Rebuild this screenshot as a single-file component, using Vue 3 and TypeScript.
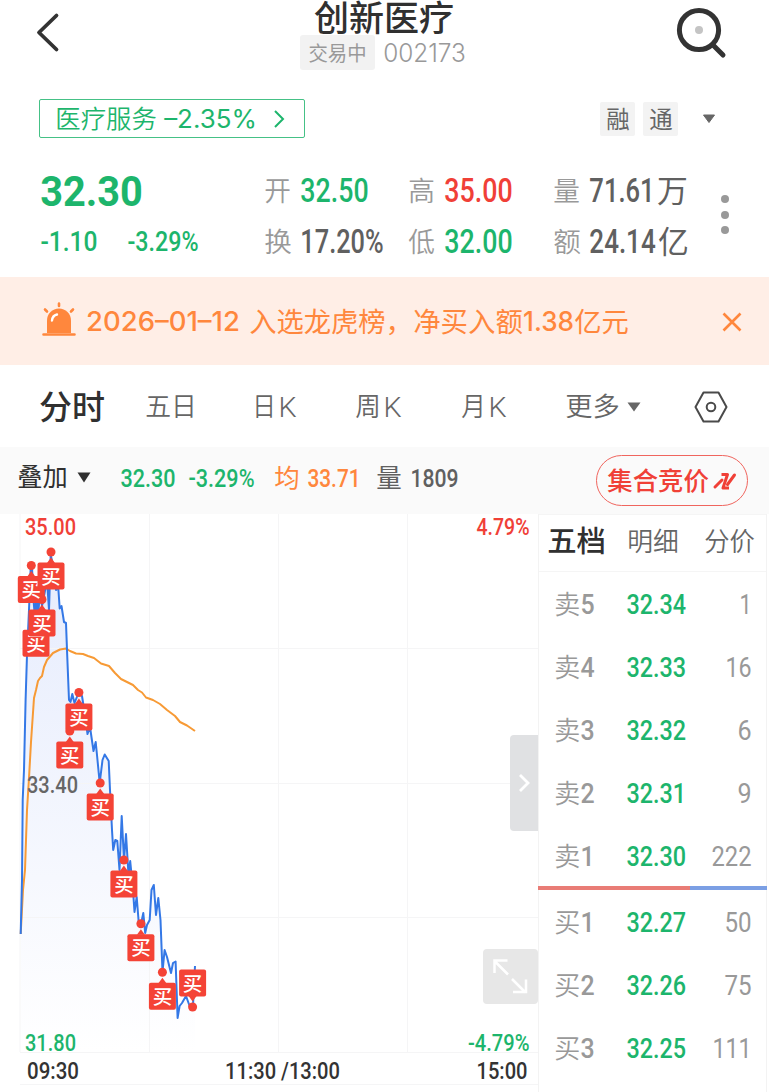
<script setup lang="ts">
import { h, type FunctionalComponent } from 'vue'

interface LabelProps {
  t: string
  w: number
  s: number
  k?: 'num' | 'cjk' | 'lat'
  b?: number
}

const faces = {
  num: { family: 'Roboto, "Liberation Sans", sans-serif', base: 0.85, side: 0.02 },
  cjk: { family: '"Noto Sans CJK SC", sans-serif', base: 0.88, side: 0.03 },
  lat: { family: 'Inter, "Liberation Sans", sans-serif', base: 0.864, side: 0.035 },
}

// A label fitted to a given width, so that digits take a condensed shape.
const Label: FunctionalComponent<LabelProps> = (p) => {
  const face = faces[p.k ?? 'num']
  const side = face.side * p.s
  return h('svg', { class: 'label', width: p.w, height: p.s }, [
    h(
      'text',
      {
        x: -side,
        y: face.base * p.s,
        textLength: p.w + side * 2,
        lengthAdjust: 'spacingAndGlyphs',
        'font-family': face.family,
        'font-size': p.s,
        'font-weight': p.b ?? (p.k === 'cjk' || p.k === 'lat' ? 400 : 500),
        fill: 'currentColor',
      },
      p.t,
    ),
  ])
}
Label.props = ['t', 'w', 's', 'k', 'b']

const tabs = [
  { t: '五日', k: '', w: 50 },
  { t: '日', k: 'K', w: 22 },
  { t: '周', k: 'K', w: 24 },
  { t: '月', k: 'K', w: 23 },
]

interface Level { side: string; n: string; price: string; qty: string; w: number }
const asks: Level[] = [
  { side: '卖', n: '5', price: '32.34', qty: '1', w: 11 },
  { side: '卖', n: '4', price: '32.33', qty: '16', w: 25 },
  { side: '卖', n: '3', price: '32.32', qty: '6', w: 13 },
  { side: '卖', n: '2', price: '32.31', qty: '9', w: 13 },
  { side: '卖', n: '1', price: '32.30', qty: '222', w: 39 },
]
const bids: Level[] = [
  { side: '买', n: '1', price: '32.27', qty: '50', w: 26 },
  { side: '买', n: '2', price: '32.26', qty: '75', w: 26 },
  { side: '买', n: '3', price: '32.25', qty: '111', w: 38 },
]

const price =
  '20.7,934 22,880 22.7,800 24,770 25.6,700 27,655 29,610 30.7,567 32,567 33.5,600 35,618 36.5,592 38,618 40,590 42,606 44,596 47,580 49,610 50.7,555 53,565 56,590 58.3,588 59.7,608.5 61.5,606 64,622 66,623 67.2,655 69,700 70.5,702 72.3,694 74.5,703 78.5,693 82,696 85,715 87.5,734 90,727 93.5,751 95.7,742 97.2,757 99.7,783 102.5,760 104.7,754.5 108.7,761 110,790 112,830 113.2,850 115.3,840 117.3,841 119.5,870 121.7,816 124,860 126,834 128.5,875 130.2,861 133,890 134.5,912 136.7,897 139,926 141,924 143.3,913 145.2,933 147,925 149.7,920 151.5,890 153.8,885 156,915 158.3,898 160.5,920 162.5,972 164.6,950 167,957 171,973 173,963 175.6,961.5 177.6,1018 179.6,1006 182,1003 186,996 190,1007 193,1005 195,966'
const average =
  '20.7,934 23,890 25,870 27,810 29,778 31,742 34,698 36,690 38,681 40,678 42,676 44,667 47,660 53,653 60,649.5 66,648.5 70,651 76,653.5 83,654 88,656 94,658 101,663.5 109,666 115,673 121,679 127,682 133,685 138,690 142,692.5 146,697.5 153,700 160,704 167,710 175,716 180,722 187,725.5 195,731'
const area = `${price} 195,1052 20.7,1052`

interface Marker { x: number; y: number; dot: number }
const markers: Marker[] = [
  { x: 36, y: 643.3, dot: 620 },
  { x: 42, y: 623, dot: 599.5 },
  { x: 31.3, y: 589.5, dot: 565.5 },
  { x: 51, y: 576, dot: 552 },
  { x: 69.8, y: 755, dot: 731 },
  { x: 78.9, y: 717, dot: 692.5 },
  { x: 100.2, y: 807, dot: 783 },
  { x: 123.9, y: 884, dot: 860 },
  { x: 140.9, y: 947.7, dot: 923.7 },
  { x: 162.4, y: 996.3, dot: 972.3 },
  { x: 192.6, y: 983, dot: 1007 },
]
function pointer(m: Marker): string {
  const d = m.dot < m.y ? -1 : 1
  return `${m.x - 4},${m.y + 13 * d} ${m.x + 4},${m.y + 13 * d} ${m.x},${m.y + 18.5 * d}`
}

interface Figure { t: string; x: number; y: number; w: number; c: string }
const figures: Figure[] = [
  { t: '35.00', x: 25, y: 535, w: 51, c: '#f04037' },
  { t: '4.79%', x: 476.5, y: 535, w: 53, c: '#f04037' },
  { t: '33.40', x: 27, y: 792.5, w: 51, c: '#666' },
  { t: '31.80', x: 25, y: 1051, w: 51, c: '#1db56c' },
  { t: '-4.79%', x: 468, y: 1051, w: 61.5, c: '#1db56c' },
  { t: '09:30', x: 27, y: 1078.5, w: 52, c: '#333' },
  { t: '11:30 /13:00', x: 225, y: 1078.5, w: 115, c: '#333' },
  { t: '15:00', x: 476.5, y: 1078.5, w: 51, c: '#333' },
]
</script>

<template>
  <main class="screen">
    <header class="top">
      <svg class="back" width="24" height="40"><path d="M20.5 2.5 3 19.5 20.5 36.5" /></svg>
      <div class="heading">
        <Label t="创新医疗" :w="138" :s="35" k="cjk" :b="500" />
        <div class="code">
          <span class="state"><Label t="交易中" :w="57" :s="20" k="cjk" /></span>
          <Label t="002173" :w="81" :s="25" k="lat" :b="300" />
        </div>
      </div>
      <svg class="search" width="54" height="54">
        <circle cx="25" cy="25" r="19.6" />
        <path d="M39.5 40.5 49 50" />
        <circle class="pupil" cx="25" cy="25" r="4" />
      </svg>
    </header>

    <section class="sector">
      <div class="sector-box">
        <Label t="医疗服务" :w="100" :s="25.5" k="cjk" :b="350" />
        <Label t="–2.35%" :w="91" :s="25" k="lat" />
        <svg width="12" height="20"><path d="M2 2 10 10 2 18" /></svg>
      </div>
      <div class="tags">
        <span><Label t="融" :w="22" :s="23.5" k="cjk" /></span>
        <span><Label t="通" :w="22" :s="23.5" k="cjk" /></span>
        <svg width="14" height="10"><path d="M1.5 1H12.5L7 8.5Z" /></svg>
      </div>
    </section>

    <section class="quote">
      <Label class="green last" t="32.30" :w="101" :s="43" :b="700" />
      <Label t="开" :w="25" :s="27" k="cjk" :b="350" />
      <Label class="green" t="32.50" :w="67" :s="32.5" />
      <Label t="高" :w="25" :s="27" k="cjk" :b="350" />
      <Label class="red" t="35.00" :w="67" :s="32.5" />
      <Label t="量" :w="25" :s="27" k="cjk" :b="350" />
      <div class="dark"><Label t="71.61" :w="64" :s="32.5" /><Label t="万" :w="29" :s="31" k="cjk" /></div>
      <div class="green change">
        <Label t="-1.10" :w="56" :s="28" /><Label t="-3.29%" :w="70" :s="28" />
      </div>
      <Label t="换" :w="26" :s="27" k="cjk" :b="350" />
      <Label class="dark" t="17.20%" :w="82" :s="32.5" />
      <Label t="低" :w="25" :s="27" k="cjk" :b="350" />
      <Label class="green" t="32.00" :w="67" :s="32.5" />
      <Label t="额" :w="26" :s="27" k="cjk" :b="350" />
      <div class="dark"><Label t="24.14" :w="65" :s="32.5" /><Label t="亿" :w="29" :s="31" k="cjk" /></div>
      <div class="more"><i /><i /><i /></div>
    </section>

    <section class="notice">
      <svg class="alarm" width="34" height="36">
        <path class="solid" d="M5 31V18.500A12 12 0 0 1 29 18.500V31Z" />
        <path class="rays" d="M1.500 32.500H32.500M17 1.500V4M3 7.500 5 9.500M31 7.500 29 9.500" />
        <path class="shine" d="M10 18.500Q10.500 13.500 15 12.500" />
      </svg>
      <Label t="2026–01–12" :w="152" :s="27" k="lat" :b="450" />
      <Label class="n2" t="入选龙虎榜，" :w="162" :s="27.5" k="cjk" />
      <Label t="净买入额" :w="108" :s="27.5" k="cjk" />
      <Label class="n3" t="1.38" :w="49" :s="27" k="lat" :b="450" />
      <Label t="亿元" :w="53" :s="27.5" k="cjk" />
      <svg class="close" width="20" height="20"><path d="M1.500 1.500 18.500 18.500M18.500 1.500 1.500 18.500" /></svg>
    </section>

    <nav class="tabs">
      <Label class="on" t="分时" :w="64" :s="33" k="cjk" :b="500" />
      <div v-for="tab in tabs" :key="tab.t">
        <Label :t="tab.t" :w="tab.w" :s="26.5" k="cjk" :b="350" />
        <Label v-if="tab.k" :t="tab.k" :w="17" :s="28" :b="300" />
      </div>
      <div class="extra">
        <Label t="更多" :w="53" :s="26.5" k="cjk" :b="350" />
        <svg width="14" height="10"><path d="M.5.500H13.500L7 9.500Z" /></svg>
      </div>
      <svg class="hex" width="34" height="32">
        <path d="M9.500 1.500H24.500L32.500 16 24.500 30.500H9.500L1.500 16Z" />
        <circle cx="17" cy="16" r="4.300" />
      </svg>
    </nav>

    <section class="info">
      <Label class="ink" t="叠加" :w="49" :s="25.5" k="cjk" />
      <svg class="ink" width="14" height="11"><path d="M.5.500H13.500L7 10.500Z" /></svg>
      <Label class="green" t="32.30" :w="54" :s="26.500" />
      <Label class="green" t="-3.29%" :w="65" :s="26.500" />
      <Label class="orange" t="均" :w="24" :s="25" k="cjk" />
      <Label class="orange" t="33.71" :w="52" :s="26.500" />
      <Label class="dark" t="量" :w="24" :s="25" k="cjk" />
      <Label class="dark" t="1809" :w="47" :s="26.500" />
      <div class="auction">
        <Label t="集合竞价" :w="100" :s="25.5" k="cjk" :b="500" />
        <svg width="23" height="20">
          <path d="M2 16 9 9M14.500 13.500 21.500 4" /><path class="thick" d="M8.500 3.500H14.500L10 17H16" />
        </svg>
      </div>
    </section>

    <section class="board">
      <div class="chart">
        <svg class="plot" width="538" height="578" viewBox="0 514 538 578">
          <defs>
            <linearGradient id="fade" x1="0" y1="0" x2="0" y2="1">
              <stop offset="0" stop-color="#e6ecfd" />
              <stop offset=".65" stop-color="#f6f8fe" />
              <stop offset="1" stop-color="#ffffff" />
            </linearGradient>
          </defs>
          <polygon :points="area" fill="url(#fade)" />
          <path class="grid" d="M20 514V1052M149.500 514V1052M278.500 514V1052M407.500 514V1052M20 648.500H538M20 783.500H538M20 917.500H538M20 1052.500H538M20 1084.500H538" />
          <polyline class="average" :points="average" />
          <polyline class="price" :points="price" />
          <g class="figures">
            <text
              v-for="f in figures" :key="f.t" :x="f.x" :y="f.y" :textLength="f.w"
              lengthAdjust="spacingAndGlyphs" :fill="f.c"
            >{{ f.t }}</text>
          </g>
          <g v-for="m in markers" :key="m.x" class="marker">
            <circle :cx="m.x" :cy="m.dot" r="4.500" />
            <polygon :points="pointer(m)" />
            <rect :x="m.x - 13.500" :y="m.y - 13.500" width="27" height="27" rx="2" />
            <text :x="m.x" :y="m.y + 7.500">买</text>
          </g>
        </svg>
        <div class="handle"><svg width="12" height="20"><path d="M2 2 10 10 2 18" /></svg></div>
        <div class="expand">
          <svg width="35" height="35"><path d="M15 15.500 1.500 2M1.500 14V1.500H14.500M19 20 32.500 33.500M33 20.500V33H20" /></svg>
        </div>
      </div>

      <aside class="depth">
        <div class="depth-tabs">
          <Label class="on" t="五档" :w="57" :s="29" k="cjk" :b="500" />
          <Label t="明细" :w="50" :s="26" k="cjk" :b="350" />
          <Label t="分价" :w="49" :s="26" k="cjk" :b="350" />
        </div>
        <div v-for="l in asks" :key="l.price" class="level">
          <Label :t="l.side" :w="24.5" :s="26" k="cjk" :b="350" />
          <Label class="n" :t="l.n" :w="13" :s="28.500" />
          <Label class="green" :t="l.price" :w="58.500" :s="28.500" />
          <Label class="qty" :t="l.qty" :w="l.w" :s="28.500" :b="400" />
        </div>
        <div class="ratio"><i /></div>
        <div v-for="l in bids" :key="l.price" class="level">
          <Label :t="l.side" :w="24.5" :s="26" k="cjk" :b="350" />
          <Label class="n" :t="l.n" :w="13" :s="28.500" />
          <Label class="green" :t="l.price" :w="58.500" :s="28.500" />
          <Label class="qty" :t="l.qty" :w="l.w" :s="28.500" :b="400" />
        </div>
      </aside>
    </section>
  </main>
</template>

<style>
body { margin: 0; background: #fff; }
</style>

<style scoped>
.screen { width: 769px; height: 1092px; overflow: hidden; background: #fff; color: #666; font-family: Roboto, "Noto Sans CJK SC", sans-serif; }
svg { display: block; flex: none; overflow: visible; fill: none; }
.green { color: #1db56c; }
.red { color: #f04037; }
.orange { color: #ff873d; }
.dark { color: #606060; }
.ink, .on { color: #303030; }

.top { display: grid; grid-template-columns: 300px 376px 1fr; height: 85px; }
.back { margin: 13px 0 0 36px; }
.back path { stroke: #333; stroke-width: 3.8; stroke-linecap: round; stroke-linejoin: round; }
.heading { color: #303030; }
.heading > svg { margin-left: 15px; }
.code { display: flex; align-items: center; gap: 9px; height: 35px; color: #999; }
.state { display: flex; align-items: center; justify-content: center; width: 75px; height: 35px; border-radius: 3px; background: #f2f2f2; }
.search { margin: 5px 0 0 -2px; }
.search * { stroke: #333; stroke-width: 5; stroke-linecap: round; }
.search .pupil { stroke: none; fill: #c4c4c4; }

.sector { display: flex; justify-content: space-between; align-items: center; height: 67px; padding: 0 53px 0 39px; }
.sector-box { display: flex; align-items: center; box-sizing: border-box; width: 266px; height: 39px; padding-left: 15.5px; border: 1.5px solid #45c186; border-radius: 2px; color: #1db56c; }
.sector-box svg:nth-child(2) { margin-left: 9px; }
.sector-box svg:nth-child(3) { margin-left: 17px; stroke: currentColor; stroke-width: 2; }
.tags { display: flex; align-items: center; gap: 8px; }
.tags span { display: flex; align-items: center; justify-content: center; width: 35px; height: 34px; border-radius: 2px; background: #f3f3f3; }
.tags > svg { margin-left: 16px; fill: #666; stroke: #666; stroke-linejoin: round; }

.quote { position: relative; display: grid; grid-template-columns: 224px 36.5px 108px 36px 109px 36px 109.5px; grid-template-rows: 51px 51px; align-items: center; padding: 13px 0 10px 40.5px; color: #999; }
.quote > div.dark { display: flex; align-items: center; gap: 4px; }
.change { display: flex; gap: 31px; margin-top: -1px; }
.more { position: absolute; top: 43px; right: 40px; display: grid; gap: 7.5px; }
.more i { width: 8px; height: 8px; border-radius: 50%; background: #999; }

.notice { display: flex; align-items: center; height: 88px; box-sizing: border-box; padding: 1px 27px 0 42px; background: #ffeee6; color: #ff873d; }
.alarm { margin: -4px 11px 0 0; }
.solid { fill: #ff873d; }
.rays { stroke: #ff873d; stroke-width: 2.6; stroke-linecap: round; }
.shine { stroke: #fff; stroke-width: 2.4; stroke-linecap: round; }
.n2 { margin-left: 11px; margin-right: 2px; }
.n3 { margin: 0 2px; }
.close { margin-left: auto; }
.close path { stroke: #ff873d; stroke-width: 2.6; }

.tabs { display: grid; grid-template-columns: 106px 107px 103px 106px 104px 128px 40px; align-items: center; height: 82px; padding: 1px 0 0 40px; box-sizing: border-box; }
.tabs > div { display: flex; align-items: center; gap: 4px; }
.tabs .extra { gap: 8px; }
.extra svg:last-child { fill: #666; }
.hex * { stroke: #4a4a4a; stroke-width: 2; stroke-linejoin: round; }

.info { display: flex; align-items: center; height: 67px; padding: 0 21px 0 18px; box-sizing: border-box; background: #fafafa; }
.info > svg { margin-top: -7px; }
.info > svg:nth-child(2) { margin-left: 10px; margin-top: -6px; fill: #303030; }
.info > svg:nth-child(3) { margin-left: 30px; }
.info > svg:nth-child(4) { margin-left: 14px; }
.info > svg:nth-child(5) { margin-left: 21px; }
.info > svg:nth-child(6) { margin-left: 9px; }
.info > svg:nth-child(7) { margin-left: 17px; }
.info > svg:nth-child(8) { margin-left: 10px; }
.auction { display: flex; align-items: center; gap: 5px; box-sizing: border-box; width: 152px; height: 51px; padding-left: 11px; margin-left: auto; border: 1.5px solid #f0655e; border-radius: 26px; color: #f04037; }
.auction path { stroke: #f04037; stroke-width: 3; stroke-linecap: round; }
.auction .thick { stroke-linecap: butt; stroke-linejoin: round; }

.board { display: grid; grid-template-columns: 538px 229px; height: 578px; }
.chart { position: relative; }
.grid { stroke: #f5f5f6; }
.price { stroke: #3478e6; stroke-width: 2; stroke-linejoin: round; }
.average { stroke: #f79a35; stroke-width: 2; stroke-linejoin: round; }
.figures { font: 500 24.500px Roboto, sans-serif; }
.marker { fill: #f44336; }
.marker text { fill: #fff; font: 500 19.500px "Noto Sans CJK SC", sans-serif; text-anchor: middle; }
.handle { position: absolute; top: 221px; right: 0; display: grid; place-items: center; width: 28px; height: 96px; border-radius: 4px 0 0 4px; background: #e0e1e3; }
.handle path { stroke: #fff; stroke-width: 2.8; }
.expand { position: absolute; top: 435px; right: 0; display: grid; place-items: center; width: 55px; height: 55px; border-radius: 4px; background: #e7e7e7; }
.expand path { stroke: #fff; stroke-width: 2.5; }

.depth { box-sizing: border-box; border-left: 1px solid #f3f3f3; border-right: 1px solid #f3f3f3; }
.depth-tabs { display: grid; grid-template-columns: 80px 77px 50px; align-items: center; height: 58.500px; box-sizing: border-box; padding: 0 0 6px 9px; border-top: 1px solid #f5f5f5; background: linear-gradient(#f5f5f5, #f5f5f5) 0 56px / 100% 1px no-repeat; }
.level { display: grid; grid-template-columns: 26.5px 45.5px 60px 1fr; align-items: center; height: 63px; padding: 0 15px 0 15.5px; color: #999; }
.qty { justify-self: end; }
.ratio { height: 4px; margin: -1.500px -1px .500px; background: #7b9fe4; }
.ratio i { display: block; width: 152px; height: 4px; background: #e97c76; }
</style>
